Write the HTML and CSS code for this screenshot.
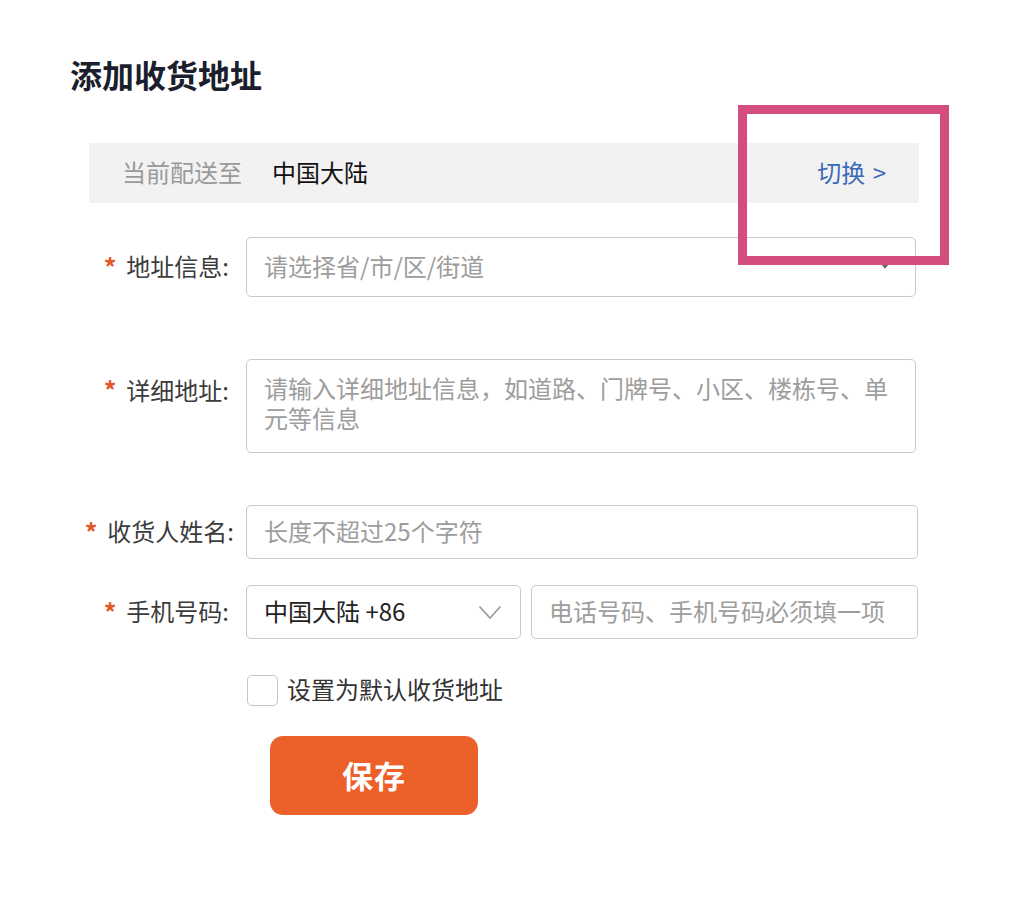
FILE: index.html
```html
<!DOCTYPE html>
<html lang="zh-CN">
<head>
<meta charset="utf-8">
<title>添加收货地址</title>
<link rel="stylesheet" href="styles.css">
</head>
<body>
<div class="page">
  <h1 class="title">添加收货地址</h1>
  <div class="region-bar">
    <span class="region-label">当前配送至</span>
    <span class="region-value">中国大陆</span>
    <span class="region-switch">切换 &gt;</span>
  </div>

  <form class="form">
    <div class="row row-area">
      <label class="label"><span class="req">*</span><span>地址信息:</span></label>
      <div class="field field-wide select-box">
        <span class="placeholder">请选择省/市/区/街道</span>
        <svg class="chev-small" width="14" height="10" viewBox="0 0 14 10"><path d="M2 2 L7 8 L12 2" fill="none" stroke="#666" stroke-width="2.2"/></svg>
      </div>
    </div>

    <div class="row row-detail">
      <label class="label label-top"><span class="req">*</span><span>详细地址:</span></label>
      <div class="field field-wide textarea">
        <span class="placeholder">请输入详细地址信息，如道路、门牌号、小区、楼栋号、单元等信息</span>
      </div>
    </div>

    <div class="row row-name">
      <label class="label label-long"><span class="req">*</span><span>收货人姓名:</span></label>
      <div class="field field-full input-sm">
        <span class="placeholder">长度不超过25个字符</span>
      </div>
    </div>

    <div class="row row-phone">
      <label class="label"><span class="req">*</span><span>手机号码:</span></label>
      <div class="phone-group">
        <div class="field code-select input-sm">
          <span class="value">中国大陆 +86</span>
          <svg class="chev" width="24" height="15" viewBox="0 0 24 15"><path d="M1.5 1.5 L12 13 L22.5 1.5" fill="none" stroke="#999" stroke-width="1.6"/></svg>
        </div>
        <div class="field phone-input input-sm">
          <span class="placeholder">电话号码、手机号码必须填一项</span>
        </div>
      </div>
    </div>

    <div class="row row-check">
      <span class="checkbox"></span>
      <span class="check-label">设置为默认收货地址</span>
    </div>

    <div class="row row-btn">
      <button type="button" class="save-btn">保存</button>
    </div>
  </form>

  <div class="highlight"></div>
</div>
</body>
</html>
```

FILE: styles.css
```css
* { box-sizing: border-box; }
html, body {
  margin: 0;
  padding: 0;
  background: #ffffff;
}
body {
  font-family: "Noto Sans CJK SC", "Noto Sans", sans-serif;
  color: #333;
}
.page {
  position: relative;
  width: 1020px;
  height: 920px;
  padding: 50px 0 0 70px;
}
.title {
  margin: 0;
  font-size: 32px;
  line-height: 48px;
  font-weight: 700;
  color: #1b1e2c;
}
.region-bar {
  margin: 45px 0 0 19px;
  width: 830px;
  height: 60px;
  background: #f2f2f2;
  display: flex;
  align-items: center;
  padding: 0 33px 3px 33px;
  font-size: 24px;
}
.region-label { color: #9a9a9a; }
.region-value { color: #111; margin-left: 30px; }
.region-switch { color: #3a6cb8; margin-left: auto; word-spacing: 2px; }

.form {
  margin-left: 19px;
  display: flex;
  flex-direction: column;
}
.row {
  display: flex;
  align-items: center;
}
.label {
  width: 157px;
  flex-shrink: 0;
  display: flex;
  justify-content: flex-end;
  align-items: center;
  padding-right: 17px;
  padding-bottom: 3px;
  font-size: 24px;
  color: #3c3c3c;
  white-space: nowrap;
}
.label-long { padding-right: 12px; }
.label-top { align-self: flex-start; padding-top: 12px; padding-bottom: 0; }
.req {
  color: #e2572c;
  margin-right: 10px;
  font-size: 25px;
  font-weight: 700;
}
.field {
  border: 1.5px solid #c9c9c9;
  border-radius: 5px;
  background: #fff;
  font-size: 24px;
  display: flex;
  align-items: center;
  padding: 0 17px 3px;
  position: relative;
}
.placeholder { color: #9d9d9d; }
.value { color: #222; }
.field-wide { width: 670px; }
.field-full { width: 672px; }

.row-area { margin-top: 34px; }
.select-box { height: 60px; }
.chev-small {
  position: absolute;
  right: 23px;
  top: 21px;
}
.row-detail { margin-top: 62px; }
.textarea {
  height: 94px;
  align-items: flex-start;
  padding-top: 13px;
  line-height: 30px;
}
.row-name { margin-top: 52px; }
.input-sm { height: 54px; }
.row-phone { margin-top: 26px; }
.phone-group {
  display: flex;
  gap: 10px;
}
.code-select {
  width: 275px;
  justify-content: space-between;
  padding-right: 18px;
}
.chev { margin-top: 3px; }
.phone-input { width: 387px; }

.row-check {
  margin-top: 36px;
  padding-left: 158px;
  height: 31px;
}
.checkbox {
  width: 31px;
  height: 31px;
  border: 1.5px solid #c4c4c4;
  border-radius: 5px;
  background: #fff;
}
.check-label {
  margin-left: 9px;
  font-size: 24px;
  line-height: 30px;
  padding-bottom: 3px;
  color: #333;
}
.row-btn {
  margin-top: 30px;
  padding-left: 181px;
}
.save-btn {
  width: 208px;
  height: 79px;
  border: none;
  border-radius: 13px;
  background: #eb6129;
  color: #fff;
  font-family: "Noto Sans CJK SC", sans-serif;
  font-size: 31px;
  font-weight: 700;
  letter-spacing: 1px;
  padding-bottom: 4px;
}
.highlight {
  position: absolute;
  left: 738px;
  top: 105px;
  width: 211px;
  height: 160px;
  border: 9.5px solid #d34d80;
  pointer-events: none;
}
```
